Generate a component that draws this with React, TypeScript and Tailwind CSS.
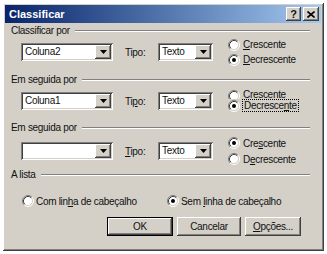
import React from "react";

const raised =
  "shadow-[inset_-1px_-1px_0_#404040,inset_1px_1px_0_#ffffff,inset_-2px_-2px_0_#808080,inset_2px_2px_0_#d4d0c8]";
const sunken =
  "shadow-[inset_1px_1px_0_#808080,inset_-1px_-1px_0_#ffffff,inset_2px_2px_0_#404040,inset_-2px_-2px_0_#d4d0c8]";

function GroupLabel({ text }: { text: string }) {
  return (
    <div className="flex items-center h-[12px]">
      <span className="leading-none whitespace-nowrap">{text}</span>
      <div className="flex-1 ml-[5px] h-[2px] border-t border-b border-t-[#808080] border-b-white" />
    </div>
  );
}

function Combo({ value, width }: { value: string; width: string }) {
  return (
    <div className={`${width} h-[18px] bg-white ${sunken} flex items-center p-[2px]`}>
      <span className="flex-1 pl-[2px] leading-none">{value}</span>
      <div className={`w-[16px] h-[14px] bg-[#d4d0c8] ${raised} flex items-center justify-center`}>
        <svg width="7" height="4" viewBox="0 0 7 4">
          <path d="M0 0H7L3.5 4Z" fill="#000" />
        </svg>
      </div>
    </div>
  );
}

function Radio({ checked }: { checked?: boolean }) {
  return (
    <svg width="12" height="12" viewBox="0 0 12 12" className="shrink-0">
      <circle cx="6" cy="6" r="4.5" fill="#fff" />
      <path d="M9.9 2.1A5.5 5.5 0 0 0 2.1 9.9" stroke="#808080" fill="none" />
      <path d="M2.1 9.9A5.5 5.5 0 0 0 9.9 2.1" stroke="#fff" fill="none" />
      <path d="M9.18 2.82A4.5 4.5 0 0 0 2.82 9.18" stroke="#404040" fill="none" />
      <path d="M2.82 9.18A4.5 4.5 0 0 0 9.18 2.82" stroke="#d4d0c8" fill="none" />
      {checked && <circle cx="6" cy="6" r="2" fill="#000" />}
    </svg>
  );
}

function Btn({ children, width, isDefault }: { children: React.ReactNode; width: string; isDefault?: boolean }) {
  return (
    <div className={`${width} h-[19px] ${isDefault ? "border border-black" : ""}`}>
      <div className={`w-full h-full bg-[#d4d0c8] ${raised} flex items-center justify-center leading-none`}>
        {children}
      </div>
    </div>
  );
}

export default function App() {
  return (
    <div className="w-[327px] h-[254px] bg-white pl-[3px] pt-[3px] font-['Liberation_Sans',Arial,sans-serif] text-[10px] tracking-[-0.3px] text-[#111]">
      <div className="w-[321px] h-[248px] bg-[#d4d0c8] pt-[2px] pl-[2px] pr-[3px] flex flex-col shadow-[inset_-1px_-1px_0_#404040,inset_1px_1px_0_#ffffff,inset_-2px_-2px_0_#808080]">
        <div className="h-[18px] flex items-center justify-between bg-gradient-to-r from-[#0a246a] to-[#a6caf0] pl-[4px] pr-[2px]">
          <span className="text-white font-bold text-[11px] tracking-normal leading-none">Classificar</span>
          <div className="flex gap-[2px]">
            <div className={`w-[15px] h-[14px] bg-[#d4d0c8] ${raised} flex items-center justify-center font-bold text-[11px] leading-none`}>
              ?
            </div>
            <div className={`w-[16px] h-[14px] bg-[#d4d0c8] ${raised} flex items-center justify-center`}>
              <svg width="8" height="7" viewBox="0 0 8 7">
                <path d="M0.5 0.5L7.5 6.5M7.5 0.5L0.5 6.5" stroke="#000" strokeWidth="1.6" />
              </svg>
            </div>
          </div>
        </div>

        <div className="flex flex-col pl-[6px] pr-[11px]">
          <div className="mt-[2px]">
            <GroupLabel text="Classificar por" />
          </div>
          <div className="flex items-center h-[30px] pl-[10px]">
            <Combo value="Coluna2" width="w-[92px]" />
            <span className="ml-[12px] w-[33px]">Tipo:</span>
            <Combo value="Texto" width="w-[55px]" />
            <div className="ml-[15px] flex flex-col">
              <div className="flex items-center h-[15px] gap-[3px]">
                <Radio />
                <span><u>C</u>rescente</span>
              </div>
              <div className="flex items-center h-[15px] gap-[3px]">
                <Radio checked />
                <span><u>D</u>ecrescente</span>
              </div>
            </div>
          </div>

          <div className="mt-[7px]">
            <GroupLabel text="Em seguida por" />
          </div>
          <div className="flex items-center h-[30px] pl-[10px]">
            <Combo value="Coluna1" width="w-[92px]" />
            <span className="ml-[12px] w-[33px]">Ti<u>p</u>o:</span>
            <Combo value="Texto" width="w-[55px]" />
            <div className="ml-[15px] flex flex-col">
              <div className="flex items-start h-[9px] gap-[3px] overflow-hidden">
                <Radio />
                <span className="leading-[10px]"><u>C</u>rescente</span>
              </div>
              <div className="flex items-center h-[13px] gap-[3px]">
                <Radio checked />
                <span className="outline outline-1 outline-dotted outline-black px-[1px] leading-[11px]">
                  Decresce<u>n</u>te
                </span>
              </div>
            </div>
          </div>

          <div className="mt-[6px]">
            <GroupLabel text="Em seguida por" />
          </div>
          <div className="flex items-center h-[32px] mt-[1px] pl-[10px]">
            <Combo value="" width="w-[92px]" />
            <span className="ml-[12px] w-[33px]"><u>T</u>ipo:</span>
            <Combo value="Texto" width="w-[55px]" />
            <div className="ml-[15px] flex flex-col">
              <div className="flex items-center h-[16px] gap-[3px]">
                <Radio checked />
                <span>Cre<u>s</u>cente</span>
              </div>
              <div className="flex items-center h-[16px] gap-[3px]">
                <Radio />
                <span>D<u>e</u>crescente</span>
              </div>
            </div>
          </div>

          <div className="mt-[2px]">
            <GroupLabel text="A lista" />
          </div>
          <div className="flex items-center h-[14px] mt-[13px] pl-[11px]">
            <div className="flex items-center gap-[2px] w-[145px]">
              <Radio />
              <span>Com lin<u>h</u>a de cabeçalho</span>
            </div>
            <div className="flex items-center gap-[2px]">
              <Radio checked />
              <span>Sem <u>l</u>inha de cabeçalho</span>
            </div>
          </div>

          <div className="flex mt-[9px] pl-[96px] gap-[4px]">
            <Btn width="w-[66px]" isDefault>
              OK
            </Btn>
            <Btn width="w-[64px]">Cancelar</Btn>
            <Btn width="w-[56px]">
              <span>
                <u>O</u>pções...
              </span>
            </Btn>
          </div>
        </div>
      </div>
    </div>
  );
}
